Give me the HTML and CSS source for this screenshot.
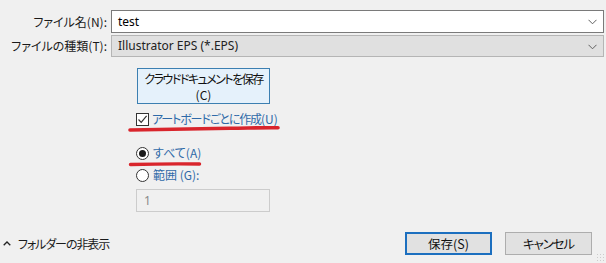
FILE: index.html
```html
<!DOCTYPE html>
<html lang="ja">
<head>
<meta charset="utf-8">
<link rel="stylesheet" href="styles.css">
</head>
<body>
<div class="dialog">
  <div class="fields">
    <label class="lbl">ファイル名(N):</label>
    <div class="combo combo-edit"><span>test</span><svg class="chev" width="9" height="6" viewBox="0 0 9 6"><path d="M0.5 0.8 L4.5 4.8 L8.5 0.8" fill="none" stroke="#606060" stroke-width="1"/></svg></div>
    <label class="lbl">ファイルの種類(T):</label>
    <div class="combo combo-list"><span>Illustrator EPS (*.EPS)</span><svg class="chev" width="9" height="6" viewBox="0 0 9 6"><path d="M0.5 0.8 L4.5 4.8 L8.5 0.8" fill="none" stroke="#606060" stroke-width="1"/></svg></div>
  </div>

  <div class="options">
    <button class="cloud"><span class="kana">クラウドドキュメントを保存</span><br>(C)</button>
    <div class="check-row">
      <span class="checkbox"><svg width="11" height="11" viewBox="0 0 11 11"><path d="M1.5 5.5 L4.2 8.3 L9.6 1.8" fill="none" stroke="#333" stroke-width="1.2"/></svg></span>
      <span class="opt-text"><span class="kana">アートボードごとに作成</span>(U)</span>
    </div>
    <div class="radio-row first">
      <span class="radio on"><span class="dot"></span></span>
      <span class="opt-text">すべて(A)</span>
    </div>
    <div class="radio-row">
      <span class="radio"></span>
      <span class="opt-text">範囲 (G):</span>
    </div>
    <div class="range">1</div>
  </div>

  <div class="footer">
    <div class="toggle"><svg width="8" height="5" viewBox="0 0 8 5"><path d="M0.7 4.3 L4 1 L7.3 4.3" fill="none" stroke="#222" stroke-width="1.3"/></svg><span class="kana">フォルダーの非表示</span></div>
    <div class="buttons">
      <button class="btn primary">保存(S)</button>
      <button class="btn"><span class="kana">キャンセル</span></button>
    </div>
  </div>

  <svg class="marks" width="606" height="263" viewBox="0 0 606 263">
    <path d="M130 130 C170 129.5 200 128.5 230 128.2 C250 128 265 127.6 278 127.8" fill="none" stroke="#d9252c" stroke-width="3.6" stroke-linecap="round"/>
    <path d="M130.5 164.5 C150 164 175 163.6 199.5 164" fill="none" stroke="#d9252c" stroke-width="3.4" stroke-linecap="round"/>
  </svg>
  <div class="grip"></div>
</div>
</body>
</html>
```

FILE: styles.css
```css
* { box-sizing: border-box; }
html, body { margin: 0; padding: 0; }
body {
  background: #f0f0f0;
  font-family: "Noto Sans", "Noto Sans CJK JP", sans-serif;
  font-size: 12px;
  color: #000;
  font-feature-settings: "palt" 1;
}
.kana { letter-spacing: -1.1px; }
.dialog {
  position: relative;
  width: 606px;
  height: 263px;
  overflow: hidden;
}
.fields {
  display: grid;
  grid-template-columns: 111px 493px;
  row-gap: 2px;
  padding-top: 10px;
}
.lbl {
  justify-self: end;
  align-self: center;
  padding-right: 4px;
  font-family: "Noto Sans CJK JP", sans-serif;
  font-size: 12px;
  line-height: 16px;
  color: #1a1a1a;
}
.combo {
  display: flex;
  align-items: center;
  justify-content: space-between;
  padding: 0 6px 0 6px;
  font-size: 12px;
}
.combo span { line-height: 16px; }
.combo-edit {
  height: 23px;
  background: #fff;
  border: 1px solid #7a7a7a;
}
.combo-list {
  height: 22px;
  background: #e0e0e0;
  border: 1px solid #b5b5b5;
  color: #222;
}
.chev { margin-top: 1px; }

.options {
  display: flex;
  flex-direction: column;
  align-items: flex-start;
  padding-left: 136px;
  padding-top: 11px;
}
.cloud {
  margin-left: 1px;
  width: 133px;
  height: 36px;
  background: #e5f1fb;
  border: 1px solid #3c7fb1;
  font-family: "Noto Sans CJK JP", sans-serif;
  font-feature-settings: "palt" 1;
  font-size: 12px;
  line-height: 16px;
  color: #111;
  padding: 1px 0 0;
  white-space: nowrap;
}
.cloud .kana { letter-spacing: -1.5px; }
.check-row, .radio-row {
  display: flex;
  align-items: center;
  gap: 3px;
}
.check-row { margin-top: 8px; height: 15px; }
.checkbox {
  width: 13px;
  height: 13px;
  border: 1px solid #333;
  background: #fff;
  display: flex;
  align-items: center;
  justify-content: center;
}
.opt-text {
  font-family: "Noto Sans CJK JP", sans-serif;
  font-size: 12px;
  line-height: 15px;
  color: #2f6aa8;
  margin-top: -2px;
}
.radio-row { height: 15px; gap: 4px; }
.radio-row.first { margin-top: 19px; }
.radio-row + .radio-row { margin-top: 7px; }
.radio {
  width: 13px;
  height: 13px;
  border: 1px solid #333;
  border-radius: 50%;
  background: #fff;
  display: flex;
  align-items: center;
  justify-content: center;
}
.radio .dot {
  width: 7px;
  height: 7px;
  border-radius: 50%;
  background: #1a1a1a;
}
.range {
  margin-top: 6px;
  width: 134px;
  height: 23px;
  border: 1px solid #cccccc;
  background: #f0f0f0;
  color: #8a8a8a;
  padding: 3px 0 0 7px;
  font-size: 12px;
  line-height: 15px;
}

.footer {
  display: flex;
  justify-content: space-between;
  align-items: center;
  padding: 0 14px 0 3px;
  margin-top: 20px;
}
.toggle {
  display: flex;
  align-items: center;
  gap: 7px;
  font-family: "Noto Sans CJK JP", sans-serif;
  font-size: 12px;
  color: #1a1a1a;
}
.toggle svg { margin-top: -1px; }
.buttons {
  display: flex;
  gap: 13px;
}
.btn {
  width: 87px;
  height: 23px;
  background: #e1e1e1;
  border: 1px solid #adadad;
  font-family: "Noto Sans CJK JP", sans-serif;
  font-feature-settings: "palt" 1;
  font-size: 12.5px;
  color: #111;
  padding: 0;
}
.btn.primary {
  border: 2px solid #1c6fbf;
}
.marks {
  position: absolute;
  left: 0;
  top: 0;
  pointer-events: none;
}
.grip {
  position: absolute;
  right: 2px;
  bottom: 2px;
  width: 8px;
  height: 8px;
  background-image: radial-gradient(circle, #bdbdbd 0.8px, transparent 1px);
  background-size: 3px 3px;
  opacity: 0.7;
}
```
